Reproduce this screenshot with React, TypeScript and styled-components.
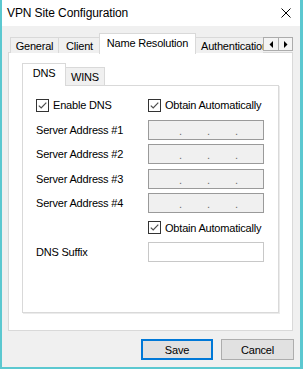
import React from "react";
import styled, { createGlobalStyle } from "styled-components";

const GlobalStyle = createGlobalStyle`
  html, body { margin: 0; padding: 0; background: #ffffff; }
  body { font-family: "Liberation Sans", Arial, sans-serif; }
  * { box-sizing: border-box; }
`;

const teal = "#5bc8d0";
const tabBorder = "#d9d9d9";

const Window = styled.div`
  width: 303px;
  height: 369px;
  display: flex;
  flex-direction: column;
  background: #f0f0f0;
  border-left: 2px solid ${teal};
  border-right: 3px solid ${teal};
  border-bottom: 2px solid ${teal};
  font-size: 11px;
  color: #000;
`;

const TitleBar = styled.div`
  height: 26px;
  flex: none;
  background: #ffffff;
  display: flex;
  align-items: center;
  justify-content: space-between;
  padding: 0 9px 0 5px;
`;

const Title = styled.span`
  font-size: 12px;
  letter-spacing: -0.1px;
  color: #000;
`;

const CloseIcon = () => (
  <svg width="10" height="10" viewBox="0 0 10 10" shapeRendering="crispEdges">
    <path d="M0.5 0.5 L9.5 9.5 M9.5 0.5 L0.5 9.5" stroke="#000" strokeWidth="1" shapeRendering="geometricPrecision" />
  </svg>
);

const Body = styled.div`
  flex: 1;
  display: flex;
  flex-direction: column;
  padding: 7px 7px 7px 6px;
  min-height: 0;
`;

const TabStrip = styled.div`
  height: 20px;
  flex: none;
  display: flex;
  position: relative;
  z-index: 1;
  margin-bottom: -1px;
`;

const TabList = styled.div`
  flex: 1;
  display: flex;
  align-items: flex-end;
  overflow: hidden;
  height: 21px;
  padding-left: 2px;
  white-space: nowrap;
`;

const Tab = styled.div<{ $w?: number; $active?: boolean; $left?: boolean }>`
  flex: none;
  ${(p) => (p.$w ? `width: ${p.$w}px;` : "")}
  height: ${(p) => (p.$active ? 21 : 16)}px;
  margin-bottom: ${(p) => (p.$active ? 0 : 1)}px;
  margin-left: ${(p) => (p.$active ? -2 : -1)}px;
  &:first-child { margin-left: 0; }
  position: relative;
  z-index: ${(p) => (p.$active ? 2 : 1)};
  background: ${(p) => (p.$active ? "#ffffff" : "#f0f0f0")};
  border: 1px solid ${tabBorder};
  border-bottom: none;
  display: flex;
  align-items: center;
  justify-content: ${(p) => (p.$left ? "flex-start" : "center")};
  padding: ${(p) => (p.$left ? "0 0 0 5px" : "0")};
  padding-bottom: ${(p) => (p.$active ? 2 : 0)}px;
  letter-spacing: -0.2px;
`;

const ArrowGroup = styled.div`
  flex: none;
  display: flex;
  align-self: flex-start;
  margin-top: 4px;
`;

const ArrowButton = styled.div`
  width: 16px;
  height: 14px;
  background: #f4f4f4;
  border: 1px solid #acacac;
  display: flex;
  align-items: center;
  justify-content: center;
  & + & { margin-left: -1px; width: 15px; }
`;

const Panel = styled.div<{ $pad: string }>`
  flex: 1;
  min-height: 0;
  background: #ffffff;
  border: 1px solid ${tabBorder};
  display: flex;
  flex-direction: column;
  padding: ${(p) => p.$pad};
`;

const InnerTabStrip = styled.div`
  height: 22px;
  flex: none;
  display: flex;
  align-items: flex-end;
  position: relative;
  z-index: 1;
  margin-bottom: -1px;
  height: 23px;
`;

const InnerTab = styled.div<{ $w: number; $active?: boolean }>`
  flex: none;
  width: ${(p) => p.$w}px;
  height: ${(p) => (p.$active ? 23 : 18)}px;
  margin-bottom: ${(p) => (p.$active ? 0 : 1)}px;
  margin-left: -1px;
  &:first-child { margin-left: 0; }
  position: relative;
  z-index: ${(p) => (p.$active ? 2 : 1)};
  background: ${(p) => (p.$active ? "#ffffff" : "#f0f0f0")};
  border: 1px solid ${tabBorder};
  border-bottom: none;
  display: flex;
  align-items: center;
  justify-content: center;
  padding-bottom: ${(p) => (p.$active ? 4 : 0)}px;
  letter-spacing: -0.2px;
`;

const InnerPanel = styled.div`
  flex: 1;
  background: #ffffff;
  border: 1px solid ${tabBorder};
  box-shadow: 1px 1px 0 #ebebeb;
  display: grid;
  grid-template-columns: 112px 116px;
  grid-auto-rows: 20px;
  row-gap: 4.5px;
  align-content: start;
  align-items: center;
  padding: 9px 0 0 13px;
`;

const CheckRow = styled.label`
  display: flex;
  align-items: center;
  gap: 4px;
  letter-spacing: -0.2px;
  white-space: nowrap;
`;

const Box = styled.span`
  width: 13px;
  height: 13px;
  flex: none;
  border: 1px solid #333333;
  background: #ffffff;
  display: flex;
`;

const Label = styled.span`
  letter-spacing: -0.2px;
  white-space: nowrap;
`;

const IpBox = styled.div`
  height: 20px;
  background: #f0f0f0;
  border: 1px solid #9a9a9a;
  display: flex;
  align-items: center;
  padding-left: 30px;
  color: #6d6d6d;
`;

const IpDot = styled.span`
  width: 28px;
  flex: none;
  line-height: 1;
  margin-top: 3px;
`;

const TextBox = styled.div`
  height: 20px;
  background: #ffffff;
  border: 1px solid #c8c8c8;
`;

const ButtonRow = styled.div`
  flex: none;
  display: flex;
  justify-content: flex-end;
  gap: 8px;
  margin-top: 8px;
  margin-right: -1px;
`;

const Button = styled.button<{ $default?: boolean }>`
  width: ${(p) => (p.$default ? 72 : 73)}px;
  height: 21px;
  padding: 0;
  background: #e1e1e1;
  border: ${(p) => (p.$default ? "2px solid #0078d7" : "1px solid #adadad")};
  font-family: "Liberation Sans", Arial, sans-serif;
  font-size: 11px;
  letter-spacing: -0.2px;
  color: #000;
`;

const Check = ({ label }: { label: string }) => (
  <CheckRow>
    <Box>
      <svg width="11" height="11" viewBox="0 0 11 11">
        <path d="M1.8 5.6 L4.2 8 L9.3 2.6" fill="none" stroke="#4d4d4d" strokeWidth="1.2" />
      </svg>
    </Box>
    {label}
  </CheckRow>
);

const Ip = () => (
  <IpBox>
    <IpDot>.</IpDot>
    <IpDot>.</IpDot>
    <IpDot>.</IpDot>
  </IpBox>
);

const Empty = styled.span``;

export default function App() {
  return (
    <>
      <GlobalStyle />
      <Window>
        <TitleBar>
          <Title>VPN Site Configuration</Title>
          <CloseIcon />
        </TitleBar>
        <Body>
          <TabStrip>
            <TabList>
              <Tab $w={49}>General</Tab>
              <Tab $w={43}>Client</Tab>
              <Tab $w={97} $active>Name Resolution</Tab>
              <Tab $w={90} $left>Authentication</Tab>
            </TabList>
            <ArrowGroup>
              <ArrowButton>
                <svg width="4" height="7" viewBox="0 0 4 7"><path d="M4 0 L0.5 3.5 L4 7 Z" fill="#000" /></svg>
              </ArrowButton>
              <ArrowButton>
                <svg width="4" height="7" viewBox="0 0 4 7"><path d="M0 0 L3.5 3.5 L0 7 Z" fill="#000" /></svg>
              </ArrowButton>
            </ArrowGroup>
          </TabStrip>
          <Panel $pad="10px 13px 17px 13px">
            <InnerTabStrip>
              <InnerTab $w={44} $active>DNS</InnerTab>
              <InnerTab $w={40}>WINS</InnerTab>
            </InnerTabStrip>
            <InnerPanel>
              <Check label="Enable DNS" />
              <Check label="Obtain Automatically" />
              <Label>Server Address #1</Label>
              <Ip />
              <Label>Server Address #2</Label>
              <Ip />
              <Label>Server Address #3</Label>
              <Ip />
              <Label>Server Address #4</Label>
              <Ip />
              <Empty />
              <Check label="Obtain Automatically" />
              <Label>DNS Suffix</Label>
              <TextBox />
            </InnerPanel>
          </Panel>
          <ButtonRow>
            <Button $default>Save</Button>
            <Button>Cancel</Button>
          </ButtonRow>
        </Body>
      </Window>
    </>
  );
}
